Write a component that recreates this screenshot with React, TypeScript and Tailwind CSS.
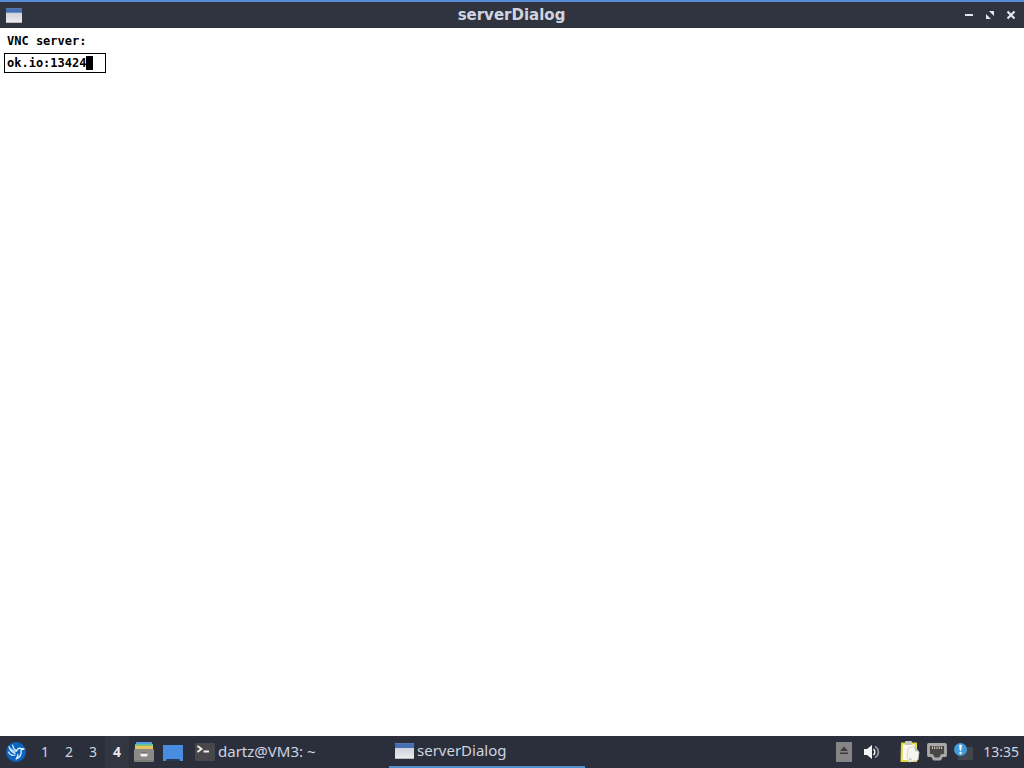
import React, { useState } from "react";

function WindowIcon({ className }: { className: string }) {
  return (
    <svg className={className} viewBox="0 0 18 16" preserveAspectRatio="none" aria-hidden="true">
      <defs>
        <linearGradient id="windowBody" x1="0" y1="0" x2="0" y2="1">
          <stop offset="0" stopColor="#c0c6d8" />
          <stop offset="1" stopColor="#eeecec" />
        </linearGradient>
      </defs>
      <rect width="18" height="16" fill="url(#windowBody)" />
      <rect width="18" height="5" fill="#446fb5" />
      <rect width="18" height="1" fill="#5577b0" />
      <rect y="15" width="18" height="1" fill="#b9b9bf" />
    </svg>
  );
}

function TitleBar() {
  return (
    <header className="grid h-7 shrink-0 grid-cols-[1fr_auto_1fr] items-center border-t-2 border-[#5b8bdc] bg-[#2f343f] pr-[7px] pl-[6px]">
      <WindowIcon className="h-[15px] w-4" />
      <h1 className="font-['DejaVu_Sans',sans-serif] text-[15px] leading-5 font-bold text-[#d0d5e0]">serverDialog</h1>
      <div className="flex items-center justify-end gap-[9px] text-[#e2e6ef]">
        <button type="button" aria-label="Minimize">
          <svg className="block h-3 w-3" viewBox="0 0 12 12" aria-hidden="true">
            <path d="M2 6h8" stroke="currentColor" strokeWidth="2" />
          </svg>
        </button>
        <button type="button" aria-label="Maximize">
          <svg className="block h-3 w-3" viewBox="0 0 12 12" fill="currentColor" aria-hidden="true">
            <path d="M5 2h5v5zM2 5v5h5z" />
          </svg>
        </button>
        <button type="button" aria-label="Close">
          <svg className="block h-3 w-3" viewBox="0 0 12 12" aria-hidden="true">
            <path d="M2.500 2.500l7 7M9.500 2.500l-7 7" stroke="currentColor" strokeWidth="2.200" />
          </svg>
        </button>
      </div>
    </header>
  );
}

function ServerForm() {
  const [server, setServer] = useState("ok.io:13424");
  return (
    <main className="flex flex-1 flex-col items-start bg-white px-1 pt-1 font-['DejaVu_Sans_Mono',monospace] text-xs font-bold text-black">
      <label htmlFor="server" className="px-[3px] leading-[18px]">
        VNC server:
      </label>
      <div className="mt-[3px] flex h-5 w-[102px] items-center border border-black pl-[2px]">
        <input
          id="server"
          value={server}
          onChange={(e) => setServer(e.target.value)}
          className="h-4 w-[79px] min-w-0 bg-transparent p-0 outline-none"
        />
        <span className="h-[14px] w-[7px] bg-black" />
      </div>
    </main>
  );
}

function MenuIcon() {
  return (
    <svg className="h-5 w-5" viewBox="0 0 20 20" aria-hidden="true">
      <circle cx="10" cy="10" r="10" fill="#0b65c0" />
      <path d="M3 4.500c2 2.200 4.200 3.200 7 4.500l-1 2.500C5.800 10.500 3.500 8 3 4.500z" fill="#a9d3fa" />
      <path
        d="M6.500 3c.3 2.500 1.500 4.200 4 6M3 4.500C3.500 8 5.800 10.500 9 11.500M2.500 10c1.200 2.600 3.500 3.800 6.500 3"
        fill="none"
        stroke="#d8ecff"
        strokeWidth="1.200"
        strokeLinecap="round"
      />
      <path
        d="M10.500 9.500c.3-2.200 1.800-3.500 3.800-3.200l3.700.7-3 .8c.8 4.200-.8 7.400-4.800 9.200 1.500-1.700 2-3.300 1.600-5"
        fill="none"
        stroke="#e8f4ff"
        strokeWidth="1.300"
        strokeLinejoin="round"
      />
    </svg>
  );
}

function FilesIcon() {
  return (
    <svg className="h-5 w-5" viewBox="0 0 20 20" aria-hidden="true">
      <path d="M2 0h16v4H2z" fill="#4aa1de" />
      <path d="M1 2h18v3H1z" fill="#6fc18d" />
      <path d="M1 4h18v4H1z" fill="#e7c45f" />
      <rect y="7" width="20" height="13" rx="1" fill="#8b8a88" />
      <path d="M0 19h20" stroke="#6f6e6c" />
      <rect x="6.500" y="11" width="7" height="3.500" rx="1" fill="#f2f2f2" />
      <path d="M7 11h6" stroke="#5d5c5a" />
    </svg>
  );
}

function DesktopIcon() {
  return (
    <svg className="h-5 w-5" viewBox="0 0 20 20" aria-hidden="true">
      <path d="M0 3h20v16h-3l-1-2H4l-1 2H0z" fill="#498de0" />
      <path d="M3 19l1-2h12l1 2z" fill="#273951" />
    </svg>
  );
}

function TerminalIcon() {
  return (
    <svg className="h-5 w-5" viewBox="0 0 20 20" aria-hidden="true">
      <rect y="1" width="20" height="18" rx="1" fill="#48484b" />
      <path d="M2.500 4l4 3-4 3M8.500 9.500H14" fill="none" stroke="#f0f0f0" strokeWidth="1.900" />
    </svg>
  );
}

function EjectIcon() {
  return (
    <svg className="h-5 w-4" viewBox="0 0 16 20" aria-hidden="true">
      <rect width="16" height="20" fill="#858585" />
      <path d="M8 4.500l4 4.500H4zM4 10.500h8V12H4z" fill="#3d3d3d" />
    </svg>
  );
}

function VolumeIcon() {
  return (
    <svg className="h-4 w-4" viewBox="0 0 16 16" aria-hidden="true">
      <path d="M0 5h3l5-4v14l-5-4H0z" fill="#f4f4f4" />
      <path d="M9.500 5c1.700 1.700 1.700 4.300 0 6" fill="none" stroke="#f4f4f4" strokeWidth="1.600" />
      <path d="M11 2.500c4.500 2.500 4.500 8.500 0 11" fill="none" stroke="#8d919a" strokeWidth="1.800" />
    </svg>
  );
}

function ClipboardIcon() {
  return (
    <svg className="h-[22px] w-5" viewBox="0 0 20 22" aria-hidden="true">
      <path d="M2 2.500h14v17.500H1.500z" fill="#fafaf0" stroke="#dedb3e" strokeWidth="2" />
      <rect x="5" y="0" width="7" height="4" rx="1" fill="#c9c9bd" />
      <path d="M8 7l6-2 5 6-1 8-9 2-2-4z" fill="#f5f5ef" stroke="#d2d2ca" strokeWidth=".8" />
      <path d="M14 5l5 6-4-1zM9 17l3 1-2 2z" fill="#bbb" />
    </svg>
  );
}

function NetworkIcon() {
  return (
    <svg className="h-[18px] w-5" viewBox="0 0 20 18" aria-hidden="true">
      <path d="M2 1.500h16q.5 0 .5.500v10.500H15l-2 3.500H7l-2-3.500H1.500V2q0-.5.500-.5z" fill="#494746" stroke="#aaa9a8" strokeWidth="2.800" strokeLinejoin="round" />
      <path d="M5.500 3.500v2.500M7.700 3.500v2.500M10 3.500v2.500M12.300 3.500v2.500M14.500 3.500v2.500" stroke="#c4bda9" strokeWidth="1.200" />
    </svg>
  );
}

function NoticeIcon() {
  return (
    <svg className="h-[18px] w-5" viewBox="0 0 20 18" aria-hidden="true">
      <path d="M7 4h12v13H4v-5z" fill="#41464d" />
      <circle cx="6.500" cy="6.500" r="6.500" fill="#429bdb" />
      <path d="M5.500 2h2L7 7.500H6z" fill="#fff" stroke="#fff" strokeWidth=".6" />
      <circle cx="6.500" cy="10" r="1.200" fill="#fff" />
    </svg>
  );
}

function Taskbar() {
  return (
    <footer className="flex h-8 shrink-0 items-stretch bg-[#2b2f3b] font-['Noto_Sans',sans-serif] text-sm text-[#cfd4e0]">
      <button type="button" aria-label="Menu" className="flex w-[33px] items-center pl-[6px]">
        <MenuIcon />
      </button>
      <nav className="flex" aria-label="Workspaces">
        <button type="button" className="w-6">1</button>
        <button type="button" className="w-6">2</button>
        <button type="button" className="w-6">3</button>
        <button type="button" aria-current="true" className="w-6 bg-[#323640] font-bold text-[#e4e7ee]">4</button>
      </nav>
      <div className="flex items-center gap-[9px] pl-[5px]">
        <button type="button" aria-label="Files"><FilesIcon /></button>
        <button type="button" aria-label="Show desktop"><DesktopIcon /></button>
      </div>
      <div className="flex min-w-0 flex-1 text-[15px]">
        <button type="button" className="flex w-[206px] items-center gap-[3px] pl-3">
          <TerminalIcon />
          <span>dartz@VM3: ~</span>
        </button>
        <button type="button" className="flex w-[196px] items-center gap-[3px] border-b-2 border-[#4f92d2] pl-[6px]">
          <WindowIcon className="h-4 w-[19px]" />
          <span>serverDialog</span>
        </button>
      </div>
      <div className="flex items-center pr-[5px]">
        <button type="button" aria-label="Removable media" className="mr-3"><EjectIcon /></button>
        <button type="button" aria-label="Volume" className="mr-5"><VolumeIcon /></button>
        <button type="button" aria-label="Clipboard" className="mr-[7px]"><ClipboardIcon /></button>
        <button type="button" aria-label="Network" className="mr-[7px]"><NetworkIcon /></button>
        <button type="button" aria-label="Notifications" className="mr-[9px]"><NoticeIcon /></button>
        <time>13:35</time>
      </div>
    </footer>
  );
}

export default function App() {
  return (
    <div className="flex min-h-screen flex-col bg-white">
      <TitleBar />
      <ServerForm />
      <Taskbar />
    </div>
  );
}
